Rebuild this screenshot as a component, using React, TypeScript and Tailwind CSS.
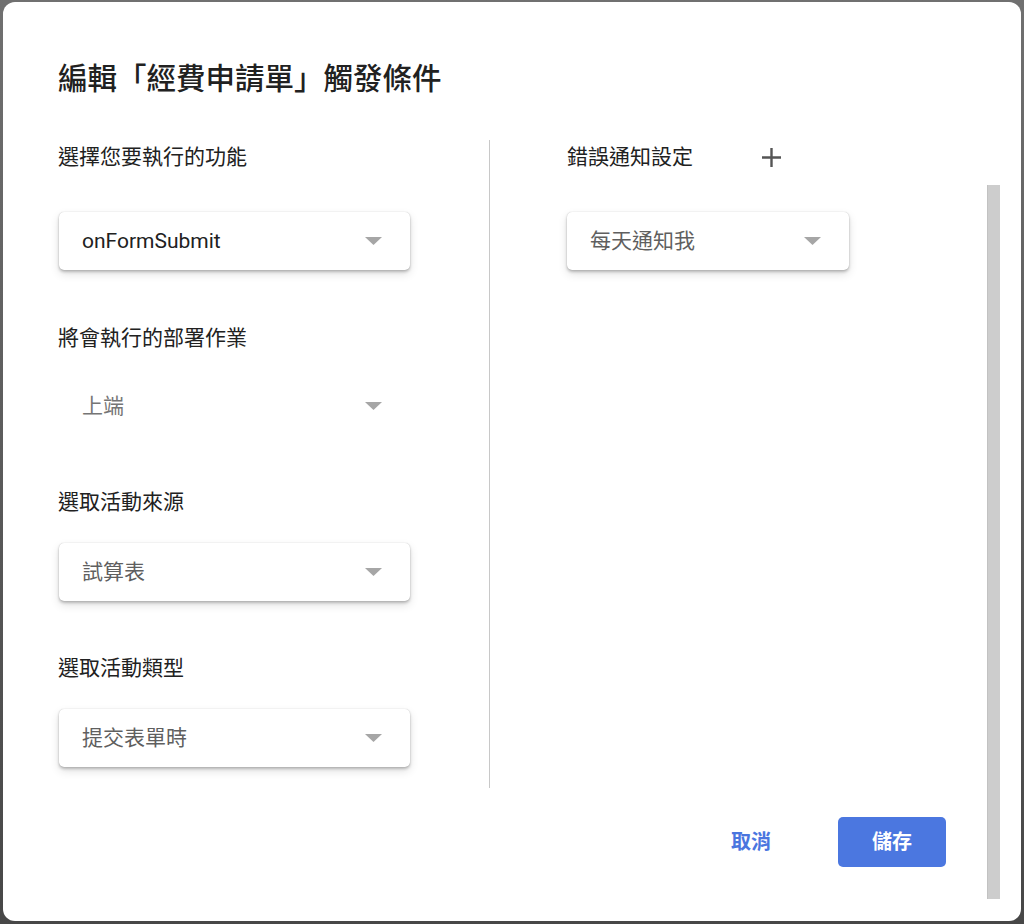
import React from "react";

const FONT = 'Roboto, "Noto Sans CJK TC", "Noto Sans", sans-serif';

function Arrow() {
  return (
    <svg width="17" height="8" viewBox="0 0 17 8" className="shrink-0">
      <path d="M0 0 L17 0 L8.5 8 Z" fill="#a6a6a6" />
    </svg>
  );
}

function Select({
  value,
  width,
  tone = "dark",
  disabled = false,
  className = "",
}: {
  value: string;
  width: string;
  tone?: "dark" | "gray";
  disabled?: boolean;
  className?: string;
}) {
  const text = disabled
    ? "text-[#757575]"
    : tone === "dark"
    ? "text-[#212121]"
    : "text-[#5f5f5f]";
  const box = disabled
    ? ""
    : "bg-white rounded-[5px] shadow-[0_0_1px_rgba(0,0,0,0.25),0_2px_3px_rgba(0,0,0,0.22),0_4px_10px_rgba(0,0,0,0.12)]";
  return (
    <div
      className={`${width} h-[58px] flex items-center justify-between pl-[23px] pr-[28px] ${box} ${className}`}
    >
      <span className={`text-[21px] leading-[28px] ${text}`}>{value}</span>
      <Arrow />
    </div>
  );
}

function Label({ children, className = "" }: { children: React.ReactNode; className?: string }) {
  return (
    <div className={`text-[21px] leading-[28px] text-[#212121] ${className}`}>{children}</div>
  );
}

export default function App() {
  return (
    <div
      className="w-[1024px] h-[924px] bg-gradient-to-b from-[#707070] to-[#474747] pt-[2px] pl-[3px] pr-[3px] pb-[3px]"
      style={{ fontFamily: FONT }}
    >
      <div className="h-full rounded-[12px] bg-white flex flex-col overflow-hidden">
        <h1 className="mt-[59px] ml-[55px] text-[29.5px] leading-[36px] font-medium text-[#212121]">
          編輯「經費申請單」觸發條件
        </h1>
        <div className="mt-[43px] flex">
          <div className="w-[984px] flex flex-col">
            <div className="flex h-[648px]">
              <div className="w-[486px] pl-[55px] pt-[3px] flex flex-col">
                <Label>選擇您要執行的功能</Label>
                <Select value="onFormSubmit" width="w-[351px]" className="mt-[41px] ml-px" />
                <Label className="mt-[54px]">將會執行的部署作業</Label>
                <Select value="上端" width="w-[351px]" disabled className="mt-[25px] ml-px" />
                <Label className="mt-[53px]">選取活動來源</Label>
                <Select value="試算表" width="w-[351px]" tone="gray" className="mt-[27px] ml-px" />
                <Label className="mt-[53px]">選取活動類型</Label>
                <Select value="提交表單時" width="w-[351px]" tone="gray" className="mt-[27px] ml-px" />
              </div>
              <div className="w-px bg-[#c8c8c8]" />
              <div className="flex-1 pl-[77px] pt-[3px] flex flex-col">
                <div className="flex items-center h-[28px]">
                  <Label>錯誤通知設定</Label>
                  <button className="ml-[68px] w-[21px] h-[21px] flex items-center justify-center">
                    <svg width="21" height="21" viewBox="0 0 21 21">
                      <path d="M10.5 1 V20 M1 10.5 H20" stroke="#555555" strokeWidth="2.4" />
                    </svg>
                  </button>
                </div>
                <Select value="每天通知我" width="w-[282px]" tone="gray" className="mt-[41px]" />
              </div>
            </div>
            <div className="mt-[29px] flex justify-end items-center pr-[41px]">
              <button className="w-[76px] h-[50px] text-[20px] font-bold text-[#4a76df]">
                取消
              </button>
              <button className="ml-[49px] w-[108px] h-[50px] rounded-[5px] bg-[#4b77e0] text-[20px] font-bold text-white">
                儲存
              </button>
            </div>
          </div>
          <div className="mt-[45px] w-[13px] h-[714px] bg-[#cdcdcd] border-l border-[#c2c2c2]" />
        </div>
      </div>
    </div>
  );
}
